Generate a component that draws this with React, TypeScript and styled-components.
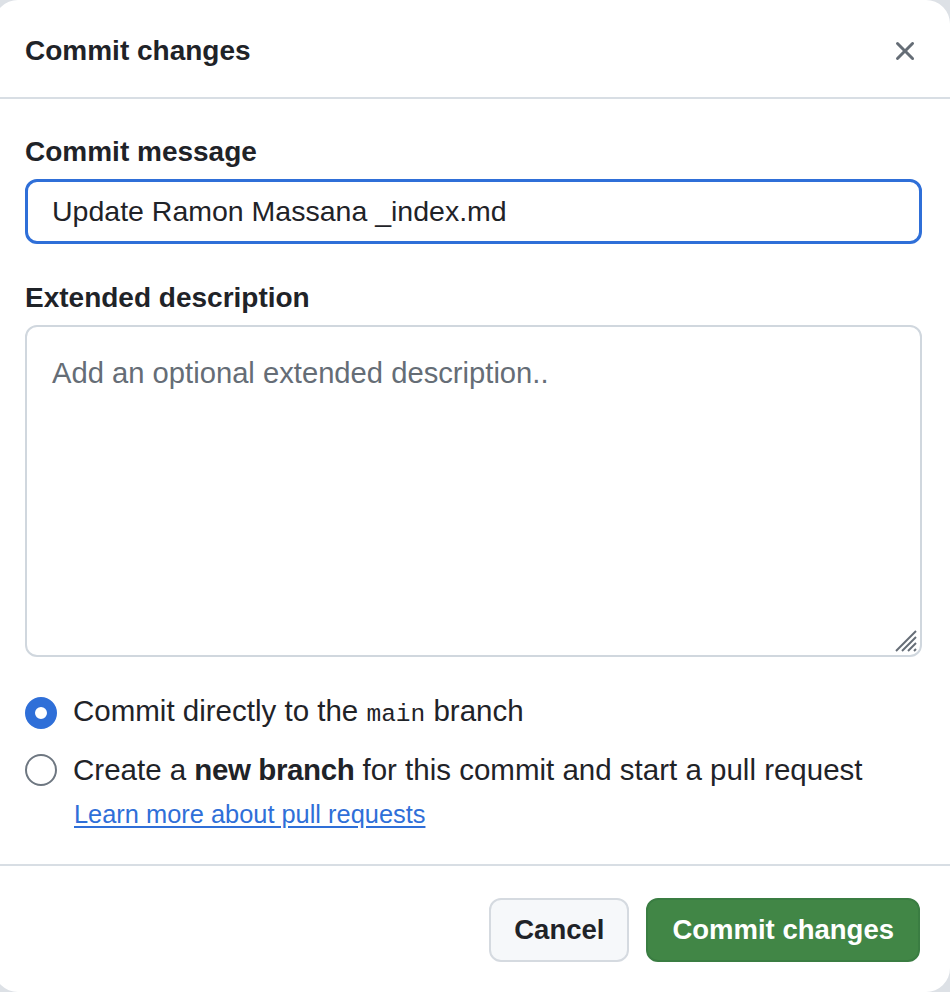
import styled, { createGlobalStyle } from "styled-components";

const GlobalStyle = createGlobalStyle`
  html, body {
    margin: 0;
    padding: 0;
    background: #dde1e6;
    overflow: hidden;
  }
  body {
    font-family: "Liberation Sans", Arial, sans-serif;
    color: #1f2328;
  }
`;

const Dialog = styled.div`
  box-sizing: border-box;
  width: 956px;
  height: 992px;
  margin-left: -6px;
  background: #ffffff;
  border-radius: 24px;
  display: flex;
  flex-direction: column;
  overflow: hidden;
`;

const Header = styled.header`
  box-sizing: border-box;
  height: 99px;
  padding: 4px 25px 0 31px;
  display: flex;
  align-items: center;
  justify-content: space-between;
  border-bottom: 2px solid #d8dee4;
`;

const Title = styled.h1`
  margin: 0;
  font-size: 28px;
  font-weight: 700;
  color: #1f2328;
`;

const CloseButton = styled.button`
  width: 40px;
  height: 40px;
  padding: 0;
  border: none;
  background: transparent;
  color: #656d76;
  display: flex;
  align-items: center;
  justify-content: center;
  cursor: pointer;
`;

const Body = styled.div`
  box-sizing: border-box;
  padding: 33px 28px 34px 31px;
  display: flex;
  flex-direction: column;
  border-bottom: 2px solid #d8dee4;
`;

const Field = styled.div`
  display: flex;
  flex-direction: column;
  gap: 7px;
  margin-bottom: 34px;
`;

const Label = styled.label`
  font-size: 28px;
  font-weight: 700;
  line-height: 40px;
  color: #1f2328;
`;

const TextInput = styled.input`
  box-sizing: border-box;
  height: 65px;
  width: 100%;
  padding: 0 24px;
  font-family: "Liberation Sans", Arial, sans-serif;
  font-size: 28.5px;
  color: #1f2328;
  background: #ffffff;
  border: 3px solid #2f6fd8;
  border-radius: 12px;
  outline: none;
`;

const AreaWrap = styled.div`
  position: relative;
  height: 332px;
`;

const TextArea = styled.textarea`
  box-sizing: border-box;
  width: 100%;
  height: 100%;
  padding: 26px 25px;
  font-family: "Liberation Sans", Arial, sans-serif;
  font-size: 29.2px;
  line-height: 40px;
  color: #1f2328;
  border: 2px solid #d0d7de;
  border-radius: 12px;
  resize: none;
  outline: none;
  &::placeholder {
    color: #656d76;
  }
`;

const Grip = styled.svg`
  position: absolute;
  right: 4px;
  bottom: 4px;
  width: 26px;
  height: 26px;
  pointer-events: none;
`;

const RadioList = styled.div`
  display: flex;
  flex-direction: column;
  gap: 15px;
`;

const RadioRow = styled.label`
  display: flex;
  align-items: center;
  gap: 16px;
  font-size: 29.5px;
  line-height: 40px;
  color: #1f2328;
`;

const Radio = styled.input.attrs({ type: "radio" })`
  appearance: none;
  margin: 0;
  width: 32px;
  height: 32px;
  flex: none;
  border-radius: 50%;
  border: 2px solid #6e7781;
  background: #ffffff;
  &:checked {
    border: 10px solid #2f6fd8;
  }
`;

const Mono = styled.code`
  font-family: "Liberation Mono", "DejaVu Sans Mono", monospace;
  font-size: 24.5px;
`;

const Strong = styled.b`
  font-weight: 700;
  letter-spacing: -0.4px;
`;

const HelpLink = styled.a`
  align-self: flex-start;
  margin: 8px 0 0 49px;
  font-size: 25.4px;
  line-height: 32px;
  color: #2f6fd8;
  text-decoration: underline;
  text-underline-offset: 3px;
`;

const Footer = styled.footer`
  flex: 1;
  display: flex;
  align-items: flex-start;
  justify-content: flex-end;
  gap: 17px;
  padding: 32px 30px 0 0;
`;

const Button = styled.button<{ $primary?: boolean }>`
  box-sizing: border-box;
  height: 64px;
  padding: 0 ${(p) => (p.$primary ? 24 : 23)}px;
  font-family: "Liberation Sans", Arial, sans-serif;
  font-size: 27.5px;
  font-weight: 700;
  border-radius: 12px;
  border: 2px solid ${(p) => (p.$primary ? "#3a7d42" : "#d5dae0")};
  background: ${(p) => (p.$primary ? "#418646" : "#f6f8fa")};
  color: ${(p) => (p.$primary ? "#ffffff" : "#1f2328")};
  cursor: pointer;
`;

const App = () => {
  return (
    <>
      <GlobalStyle />
      <Dialog>
        <Header>
          <Title>Commit changes</Title>
          <CloseButton aria-label="Close">
            <svg width="32" height="32" viewBox="0 0 16 16" fill="currentColor">
              <path d="M3.72 3.72a.75.75 0 0 1 1.06 0L8 6.94l3.22-3.22a.749.749 0 0 1 1.275.326.749.749 0 0 1-.215.734L9.06 8l3.22 3.22a.749.749 0 0 1-.326 1.275.749.749 0 0 1-.734-.215L8 9.06l-3.22 3.22a.751.751 0 0 1-1.042-.018.751.751 0 0 1-.018-1.042L6.94 8 3.72 4.78a.75.75 0 0 1 0-1.06Z" />
            </svg>
          </CloseButton>
        </Header>
        <Body>
          <Field>
            <Label htmlFor="msg">Commit message</Label>
            <TextInput id="msg" defaultValue="Update Ramon Massana _index.md" />
          </Field>
          <Field>
            <Label htmlFor="desc">Extended description</Label>
            <AreaWrap>
              <TextArea id="desc" placeholder="Add an optional extended description.." />
              <Grip viewBox="0 0 26 26">
                <g stroke="#656d76" strokeWidth="2">
                  <line x1="4" y1="24" x2="24" y2="4" />
                  <line x1="10" y1="24" x2="24" y2="10" />
                  <line x1="16" y1="24" x2="24" y2="16" />
                  <line x1="22" y1="24" x2="24" y2="22" />
                </g>
              </Grip>
            </AreaWrap>
          </Field>
          <RadioList>
            <RadioRow>
              <Radio name="branch" defaultChecked />
              <span>
                Commit directly to the <Mono>main</Mono> branch
              </span>
            </RadioRow>
            <RadioRow>
              <Radio name="branch" />
              <span>
                Create a <Strong>new branch</Strong> for this commit and start a pull request
              </span>
            </RadioRow>
          </RadioList>
          <HelpLink href="#">Learn more about pull requests</HelpLink>
        </Body>
        <Footer>
          <Button>Cancel</Button>
          <Button $primary>Commit changes</Button>
        </Footer>
      </Dialog>
    </>
  );
};

export default App;
